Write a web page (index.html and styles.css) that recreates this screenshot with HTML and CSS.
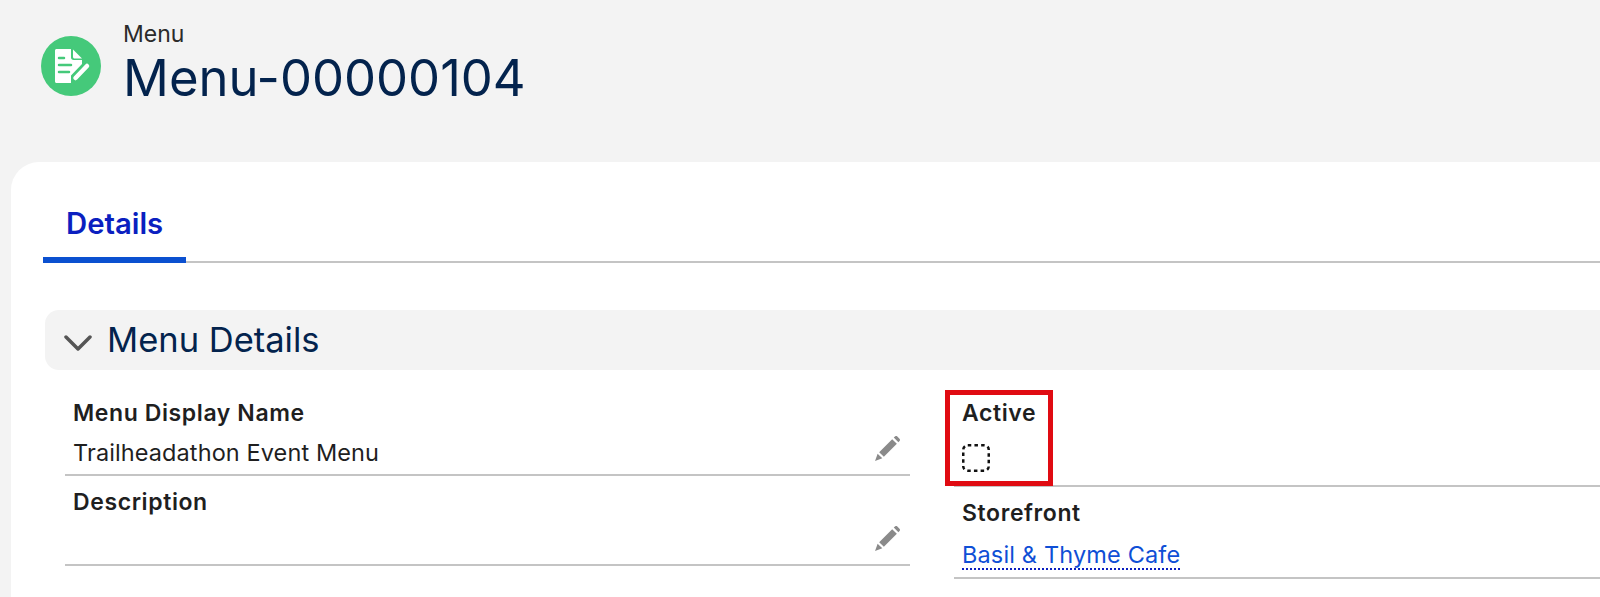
FILE: index.html
```html
<!DOCTYPE html>
<html lang="en">
<head>
    <meta charset="UTF-8">
    <meta name="viewport" content="width=device-width, initial-scale=1.0">
    <title>Menu-00000104</title>
    <link rel="stylesheet" href="styles.css">
</head>
<body>
    <!-- Page Header -->
    <header class="page-header">
        <svg class="record-icon" viewBox="0 0 60 60" fill="none" xmlns="http://www.w3.org/2000/svg">
            <circle cx="30" cy="30" r="30" fill="#45c97a"/>
            <path d="M14 14.500C14 13.700 14.700 13 15.500 13H30V21.500C30 23 31 24 32.500 24H41V28L30 39.500V47H15.500C14.700 47 14 46.300 14 45.500Z" fill="#fff"/>
            <path d="M32 13.500L41 22.500H33.500C32.700 22.500 32 21.800 32 21Z" fill="#fff"/>
            <path d="M18 22H23M18 29H30M18 36H28" stroke="#45c97a" stroke-width="2.500" stroke-linecap="round"/>
            <path d="M34.500 42L46 30" stroke="#fff" stroke-width="4.500" stroke-linecap="round"/>
        </svg>
        <div class="header-text">
            <div class="object-name">Menu</div>
            <h1 class="record-name">Menu-00000104</h1>
        </div>
    </header>

    <!-- Main Card -->
    <main class="card">
        <div class="tabs">
            <a class="tab" href="#">Details</a>
        </div>

        <div class="section-bar">
            <svg class="chevron" viewBox="0 0 28 18" fill="none" xmlns="http://www.w3.org/2000/svg">
                <path d="M2 3L14 15L26 3" stroke="#555" stroke-width="3.500" stroke-linecap="round" stroke-linejoin="round"/>
            </svg>
            <h2 class="section-title">Menu Details</h2>
        </div>

        <div class="fields">
            <div class="field-col field-col-left">
                <div class="field field-name">
                    <div class="field-label">Menu Display Name</div>
                    <div class="field-value">Trailheadathon Event Menu</div>
                    <svg class="edit-icon" viewBox="0 0 26 26" xmlns="http://www.w3.org/2000/svg">
                        <path d="M1 25L3.500 18L8 22.500ZM5 16.500L17.500 4L22 8.500L9.500 21ZM19 2.500L20.500 1.200C21 .8 21.700 .8 22.200 1.200L24.800 3.800C25.200 4.300 25.200 5 24.800 5.500L23.500 7Z" fill="#8a8a8a"/>
                    </svg>
                </div>
                <div class="field field-desc">
                    <div class="field-label">Description</div>
                    <svg class="edit-icon" viewBox="0 0 26 26" xmlns="http://www.w3.org/2000/svg">
                        <path d="M1 25L3.500 18L8 22.500ZM5 16.500L17.500 4L22 8.500L9.500 21ZM19 2.500L20.500 1.200C21 .8 21.700 .8 22.200 1.200L24.800 3.800C25.200 4.300 25.200 5 24.800 5.500L23.500 7Z" fill="#8a8a8a"/>
                    </svg>
                </div>
            </div>
            <div class="field-col field-col-right">
                <div class="field field-active">
                    <div class="field-label">Active</div>
                    <svg class="fake-checkbox" viewBox="0 0 28 28" fill="none" xmlns="http://www.w3.org/2000/svg">
                        <rect x="1.250" y="1.250" width="25.500" height="25.500" rx="4.500" stroke="#111" stroke-width="2.500" stroke-dasharray="3.500 3.200"/>
                    </svg>
                    <div class="highlight-box"></div>
                </div>
                <div class="field field-store">
                    <div class="field-label">Storefront</div>
                    <a class="field-link" href="#">Basil &amp; Thyme Cafe</a>
                </div>
            </div>
        </div>
    </main>
</body>
</html>
```

FILE: styles.css
```css
/* Reset and Base Styles */
* {
    margin: 0;
    padding: 0;
    box-sizing: border-box;
    font-family: Inter, "Liberation Sans", Arial, sans-serif;
}

:root {
    --page-grey: #f3f3f3;
    --navy: #03234d;
    --text: #1f1f1f;
    --blue: #0f4fd6;
    --line: #c4c4c4;
}

html, body {
    height: 597px;
    overflow: hidden;
}

body {
    background-color: var(--page-grey);
    display: flex;
    flex-direction: column;
}

/* Page Header */
.page-header {
    height: 162px;
    padding: 22px 0 0 41px;
    display: flex;
    align-items: flex-start;
}

.record-icon {
    width: 60px;
    height: 60px;
    margin-top: 14px;
    margin-right: 22px;
    flex-shrink: 0;
}

.object-name {
    font-size: 23px;
    line-height: 25px;
    color: #2b2b2b;
}

.record-name {
    margin-top: 1px;
    font-size: 50.800px;
    line-height: 60px;
    font-weight: 400;
    color: var(--navy);
}

/* Main Card */
.card {
    flex: 1;
    margin-left: 11px;
    background-color: #fff;
    border-top-left-radius: 28px;
    padding-left: 32px;
}

/* Tabs */
.tabs {
    height: 101px;
    border-bottom: 2px solid var(--line);
    display: flex;
    align-items: flex-end;
}

.tab {
    width: 143px;
    height: 101px;
    margin-bottom: -2px;
    padding: 46px 0 0 23px;
    font-size: 29.300px;
    line-height: 32px;
    font-weight: 600;
    color: #0b1fc0;
    text-decoration: none;
    border-bottom: 6px solid #0b50d0;
}

/* Section Bar */
.section-bar {
    height: 60px;
    margin: 47px 0 0 2px;
    padding-left: 19px;
    background-color: var(--page-grey);
    border-radius: 14px 0 0 14px;
    display: flex;
    align-items: center;
}

.chevron {
    width: 28px;
    height: 18px;
    margin-top: 5px;
    margin-right: 15px;
}

.section-title {
    font-size: 34.500px;
    line-height: 40px;
    font-weight: 400;
    color: var(--navy);
}

/* Fields */
.fields {
    display: flex;
}

.field-col-left {
    width: 845px;
    margin-left: 22px;
}

.field-col-right {
    flex: 1;
    margin-left: 44px;
}

.field {
    position: relative;
    padding-left: 8px;
    border-bottom: 2px solid var(--line);
}

.field-name {
    height: 106px;
    padding-top: 30px;
}

.field-desc {
    height: 90px;
    padding-top: 13px;
}

.field-active {
    height: 117px;
    padding-top: 30px;
}

.field-store {
    height: 92px;
    padding-top: 13px;
}

.field-label {
    font-size: 23px;
    line-height: 26px;
    font-weight: 600;
    letter-spacing: .6px;
    color: var(--text);
}

.field-value {
    margin-top: 13px;
    font-size: 23.500px;
    line-height: 27px;
    letter-spacing: .1px;
    color: var(--text);
}

.field-link {
    display: inline-block;
    margin-top: 16px;
    font-size: 23.500px;
    line-height: 26px;
    letter-spacing: .15px;
    color: var(--blue);
    text-decoration: none;
    border-bottom: 2px dotted #0b1fc0;
}

.edit-icon {
    position: absolute;
    right: 9px;
    bottom: 12px;
    width: 27px;
    height: 27px;
}

.fake-checkbox {
    display: block;
    width: 28px;
    height: 28px;
    margin-top: 18px;
}

/* Red annotation over the Active field */
.highlight-box {
    position: absolute;
    left: -9px;
    top: 20px;
    width: 108px;
    height: 96px;
    border: 5px solid #e00b12;
}
```
